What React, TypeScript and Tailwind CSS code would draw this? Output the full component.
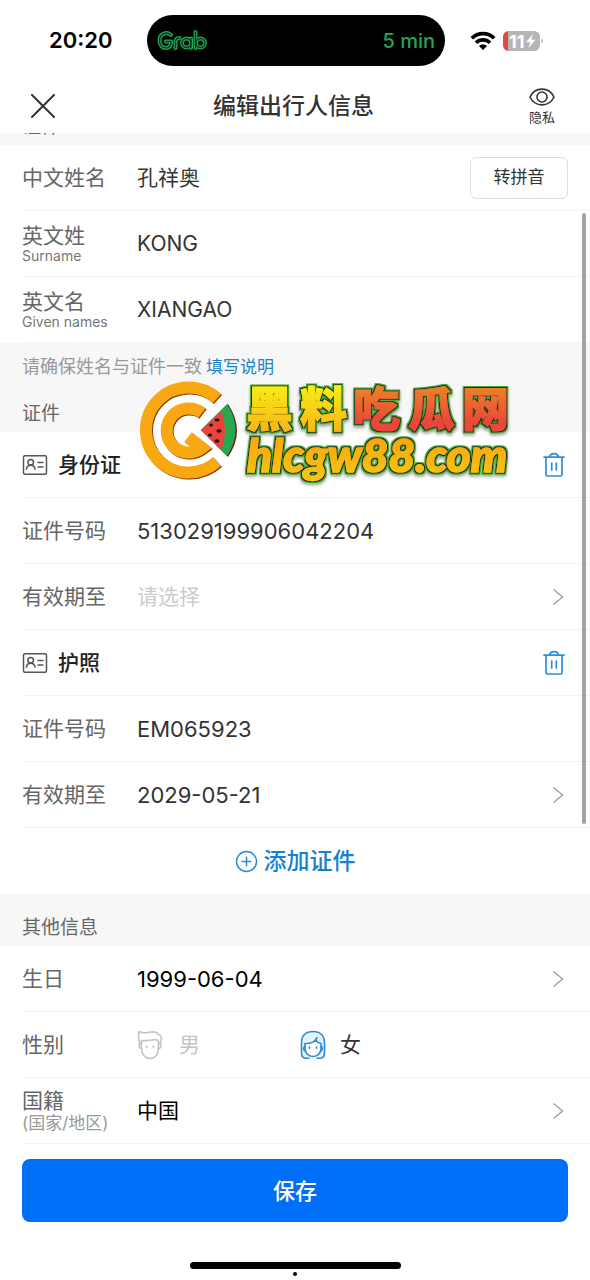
import { useState, type ReactNode } from 'react';

function Chevron() {
  return (
    <svg width="12" height="18" viewBox="0 0 12 18" fill="none" stroke="#a3a3a3" strokeWidth="1.5" aria-hidden="true">
      <path d="M1.500 1.500 10.500 9l-9 7.500" />
    </svg>
  );
}

function Trash() {
  return (
    <svg width="22" height="26" viewBox="0 0 22 26" fill="none" stroke="#2f8fd3" strokeWidth="1.7" strokeLinecap="round" strokeLinejoin="round" aria-hidden="true">
      <path d="M1 5.200h20M3 5.200v17.600q0 1.200 1.200 1.200h13.600q1.200 0 1.200-1.200V5.200M6.800 5C7 2.600 8.600 1.600 11 1.600S15 2.600 15.200 5M8.700 11v7M13.300 11v7" />
    </svg>
  );
}

function IdCard() {
  return (
    <svg width="26" height="22" viewBox="0 0 26 22" fill="none" stroke="#555" strokeWidth="1.500" aria-hidden="true">
      <rect x="1.500" y="1.800" width="23" height="18.500" rx="1.500" />
      <circle cx="8.700" cy="8.300" r="2.800" />
      <path d="M4.300 15.800c.2-3.200 1.600-4.600 4.400-4.600s4.200 1.400 4.400 4.600M15.500 8.500h6M15.500 13h6" />
    </svg>
  );
}

function MaleFace() {
  return (
    <svg width="26" height="30" viewBox="0 0 26 30" fill="none" stroke="#c4c4c4" strokeWidth="1.600" strokeLinejoin="round" strokeLinecap="round" aria-hidden="true">
      <path d="M3.200 14 1.800 9.500Q1 5 2 1.500C5 3.300 8 3 12 2.200c5-.9 8-.2 9.500 2.300 2.800.6 3.200 3.500 2.500 6.500l-1 3" />
      <path d="M4.500 10.500c5 .3 9 .2 13-1 2 0 3.500.8 4 2v7c0 6-3.700 10-8.500 10s-8.500-4-8.500-10z" />
      <path d="M4 13.500c-3 0-2.500 5 .5 5M22 13.500c3 0 2.500 5-.5 5M9.700 16v1.500M16.500 16v1.500" />
    </svg>
  );
}

function FemaleFace() {
  return (
    <svg width="26" height="30" viewBox="0 0 26 30" fill="none" stroke="#2d8bd0" strokeWidth="1.600" strokeLinejoin="round" strokeLinecap="round" aria-hidden="true">
      <path fill="#e4f4ff" d="M9 28.200H5.500C2.500 28 1.500 26 1.500 23V13C1.500 5.500 6 1.500 13 1.500S24.500 5.500 24.500 13v10c0 3-1 5-4 5.200H17" />
      <path fill="#fff" d="M5 13.500c4.500.3 8-.8 10.500-3.500 1.500 2 3 3 5.500 3.500v5c0 4.800-3.300 8-8 8s-8-3.200-8-8z" />
      <path d="M15.500 10 17 7.500M5 16.500c-2 .5-1.800 4 .5 4.500M21 16.500c2 .5 1.800 4-.5 4.500M9.500 17v1.300M16.500 17v1.300" />
    </svg>
  );
}

function Row({ children }: { children: ReactNode }) {
  return (
    <div className="ml-[22px] flex h-[66px] items-center border-b border-[#f3f3f3] pt-px pr-[22px]">{children}</div>
  );
}

function Label({ text, sub, htmlFor, cjkSub }: { text: string; sub?: string; htmlFor?: string; cjkSub?: boolean }) {
  return (
    <label htmlFor={htmlFor} className="flex w-[115px] shrink-0 flex-col text-[#666]">
      <span className="leading-6">{text}</span>
      {sub && (
        <span className={cjkSub ? 'text-[17px] leading-5 text-[#999]' : 'text-sm leading-4 text-[#777]'}>{sub}</span>
      )}
    </label>
  );
}

function Field({ id, label, sub, value, numeric, children }: { id: string; label: string; sub?: string; value: string; numeric?: boolean; children?: ReactNode }) {
  return (
    <Row>
      <Label htmlFor={id} text={label} sub={sub} />
      <input
        id={id}
        defaultValue={value}
        className={numeric ? 'min-w-0 flex-1 bg-transparent text-[22px] text-[#333] outline-none' : 'min-w-0 flex-1 bg-transparent text-[#333] outline-none'}
      />
      {children}
    </Row>
  );
}

function Picker({ id, label, sub, value, tone }: { id: string; label: string; sub?: string; value: string; tone: string }) {
  return (
    <Row>
      <Label htmlFor={id} text={label} sub={sub} cjkSub />
      <button id={id} type="button" className={`flex h-full flex-1 items-center justify-between pr-1 text-left ${tone}`}>
        <span>{value}</span>
        <Chevron />
      </button>
    </Row>
  );
}

function DocumentTitle({ name }: { name: string }) {
  return (
    <Row>
      <IdCard />
      <h3 className="ml-[10px] flex-1 font-medium text-[#222]">{name}</h3>
      <button type="button" aria-label="删除" className="pr-[3px]">
        <Trash />
      </button>
    </Row>
  );
}

function GrabStrokes() {
  return (
    <>
      <path d="M14 6Q11 3.500 8 4.200C4.500 5 2.500 8 2.500 11.500c0 5 3 7.500 6.500 7.500 3.500 0 5-2 5-6.500H9" />
      <path d="M18.500 19v-6q0-4 4-4" />
      <circle cx="29.500" cy="14" r="4.500" />
      <path d="M34 9.500V19M38.500 3v16" />
      <circle cx="43.500" cy="14" r="4.500" />
    </>
  );
}

function StatusBar() {
  return (
    <div className="flex h-20 items-center pt-px pr-[46px] pl-[49px]">
      <span className="w-[98px] text-[22px] font-semibold text-black">20:20</span>
      <div className="flex h-[51px] w-[298px] items-center justify-between rounded-full bg-black px-[10px] text-[#23a455]">
        <svg width="52" height="24" viewBox="0 0 52 24" fill="none" strokeLinecap="round" strokeLinejoin="round" role="img" aria-label="Grab">
          <g stroke="#20a858" strokeWidth="4">
            <GrabStrokes />
          </g>
          <g stroke="#063a1b" strokeWidth="1.400">
            <GrabStrokes />
          </g>
        </svg>
        <span className="text-xl font-medium">5 min</span>
      </div>
      <div className="ml-auto flex w-[74px] items-center justify-between">
        <svg width="26" height="20" viewBox="0 0 26 20" fill="none" stroke="#000" strokeWidth="3.600" aria-hidden="true">
          <path d="M1.800 7.300c6.200-6.200 16.200-6.200 22.400 0M6 11.700c3.900-3.800 10.100-3.800 14 0" />
          <path d="M13 19 9 15c2.200-2 5.800-2 8 0z" fill="#000" stroke="none" />
        </svg>
        <svg width="41" height="20" viewBox="0 0 41 20" role="img" aria-label="11">
          <defs>
            <clipPath id="cell"><rect width="37" height="20" rx="6" /></clipPath>
          </defs>
          <g clipPath="url(#cell)">
            <path d="M0 0h37v20H0z" fill="#b5b5b5" />
            <path d="M0 0h5v20H0z" fill="#e8473d" />
          </g>
          <path d="M38.500 7q3 3 0 6z" fill="#b5b5b5" />
          <text x="6" y="16.500" fontSize="18" fontWeight="700" fill="#fff" className="font-['Inter',sans-serif]">11</text>
          <path d="m30 3-7 8.200h4.300L25.500 17l7-8.200h-4.300z" fill="#fff" />
        </svg>
      </div>
    </div>
  );
}

const glyphs = [
  { ch: '黑', x: 109, fill: 'url(#gold)' },
  { ch: '料', x: 163, fill: 'url(#gold)' },
  { ch: '吃', x: 216, fill: 'url(#ember)' },
  { ch: '瓜', x: 271, fill: 'url(#ember)' },
  { ch: '网', x: 325, fill: 'url(#ember)' },
];

function Watermark() {
  return (
    <svg width="390" height="116" viewBox="0 0 390 116" role="img" aria-label="黑料吃瓜网 hlcgw88.com" className="pointer-events-none absolute top-[376px] left-[137px]">
      <defs>
        <linearGradient id="gold" x1="0" y1="0" x2="0" y2="1">
          <stop offset=".2" stopColor="#f7ef16" /><stop offset=".9" stopColor="#f9b314" />
        </linearGradient>
        <linearGradient id="amber" x1="0" y1="0" x2="0" y2="1">
          <stop offset=".2" stopColor="#fba50d" /><stop offset=".9" stopColor="#f3c515" />
        </linearGradient>
        <linearGradient id="ember" x1="0" y1="0" x2="0" y2="1">
          <stop offset=".2" stopColor="#ed8527" /><stop offset=".75" stopColor="#e9473a" />
        </linearGradient>
        <filter id="outline" x="-10%" y="-20%" width="120%" height="150%">
          <feMorphology in="SourceAlpha" operator="dilate" radius="1" result="fat0" />
          <feFlood floodColor="#153317" />
          <feComposite in2="fat0" operator="in" result="dark" />
          <feMorphology in="SourceAlpha" operator="dilate" radius="2" result="fat1" />
          <feFlood floodColor="#4aa83e" />
          <feComposite in2="fat1" operator="in" result="green" />
          <feOffset in="fat1" dy="2" />
          <feGaussianBlur stdDeviation="1.500" />
          <feComponentTransfer result="shade"><feFuncA type="linear" slope=".35" /></feComponentTransfer>
          <feMerge>
            <feMergeNode in="shade" /><feMergeNode in="green" /><feMergeNode in="dark" /><feMergeNode in="SourceGraphic" />
          </feMerge>
        </filter>
      </defs>
      <circle cx="49" cy="54" r="44" fill="#fff" />
      <g fill="none" strokeWidth="12">
        <g stroke="#8b3b12">
          <path d="M81 23.500A42.500 42.500 0 1 0 81 86.500" />
          <path d="M66 38A22 22 0 1 0 66 73L52 62" />
        </g>
        <g stroke="#f9a811">
          <path d="M80 22.500A42.500 42.500 0 1 0 80 85.500" />
          <path d="M65 37A22 22 0 1 0 65 72L51 61" />
        </g>
      </g>
      <path d="M64 54 91 28q18 27 0 53z" fill="#6d2115" />
      <path d="M64 54 90 28q17 26 0 52z" fill="#26a94d" />
      <path d="M64 54 84 35q8 19 0 39z" fill="#e9433c" />
      <g fill="#19150f">
        <ellipse cx="80" cy="44" rx="2.500" ry="1.600" /><ellipse cx="74" cy="49" rx="2" ry="1.600" />
        <ellipse cx="82" cy="55" rx="2.600" ry="1.700" /><ellipse cx="73" cy="59" rx="2.200" ry="1.500" /><ellipse cx="80" cy="65" rx="2.500" ry="1.700" />
      </g>
      <g filter="url(#outline)" className="font-['Noto_Sans_CJK_SC',sans-serif]" fontWeight="900" fontSize="47">
        {glyphs.map((g) => (
          <text key={g.ch} x={g.x} y="50" fill={g.fill} stroke={g.fill} strokeWidth="1">{g.ch}</text>
        ))}
      </g>
      <g filter="url(#outline)" className="font-['Lato',sans-serif]" fontWeight="900" fontStyle="italic" fontSize="46">
        <text x="110" y="96" fill="url(#amber)" stroke="url(#amber)" strokeWidth="1.500">hlcgw88.com</text>
      </g>
    </svg>
  );
}

export default function App() {
  const [gender, setGender] = useState('female');
  return (
    <div className="relative flex min-h-screen flex-col bg-white font-['Inter','Noto_Sans_CJK_SC',sans-serif] text-[21px] text-[#333]">
      <StatusBar />
      <header className="flex h-[53px] items-center justify-between pr-[35px] pl-[27px]">
        <button type="button" aria-label="关闭" className="flex w-[31px] justify-center">
          <svg width="26" height="26" viewBox="0 0 26 26" fill="none" stroke="#333" strokeWidth="2" strokeLinecap="round" aria-hidden="true">
            <path d="m2 1 22 22M24 1 2 23" />
          </svg>
        </button>
        <h1 className="text-[23px] font-medium text-[#333]">编辑出行人信息</h1>
        <button type="button" className="flex flex-col items-center text-[13px] leading-5 text-[#333]">
          <svg width="26" height="20" viewBox="0 0 26 20" fill="none" stroke="#333" strokeWidth="1.600" aria-hidden="true">
            <path d="M1 10C6-.5 20-.5 25 10 20 20.500 6 20.500 1 10z" />
            <circle cx="13" cy="10" r="5" />
          </svg>
          隐私
        </button>
      </header>

      <main>
        <div className="flex h-3 flex-col overflow-hidden bg-[#f7f7f7] px-[22px]">
          <h2 className="-mt-4 text-[19px] leading-5 text-[#666]">证件</h2>
        </div>
        <Field id="cn" label="中文姓名" value="孔祥奥">
          <button type="button" className="h-[42px] w-[98px] rounded-md border border-[#ddd] text-[17px] text-[#333]">转拼音</button>
        </Field>
        <Field id="surname" label="英文姓" sub="Surname" value="KONG" />
        <Field id="given" label="英文名" sub="Given names" value="XIANGAO" />

        <div className="h-[89px] bg-[#f7f7f7] px-[22px] pt-3">
          <p className="flex gap-1 text-lg leading-6 text-[#999]">
            请确保姓名与证件一致
            <a href="#help" className="text-[17px] text-[#2384cc]">填写说明</a>
          </p>
          <h2 className="mt-[23px] text-[19px] leading-6 text-[#666]">证件</h2>
        </div>

        <DocumentTitle name="身份证" />
        <Field id="idno" label="证件号码" value="513029199906042204" numeric />
        <Picker id="idexp" label="有效期至" value="请选择" tone="text-[#ccc]" />
        <DocumentTitle name="护照" />
        <Field id="passno" label="证件号码" value="EM065923" numeric />
        <Picker id="passexp" label="有效期至" value="2029-05-21" tone="text-[22px] text-[#333]" />

        <button type="button" className="flex h-[66px] w-full items-center justify-center gap-[6px] text-[23px] font-medium text-[#1681d2]">
          <svg width="23" height="23" viewBox="0 0 23 23" fill="none" stroke="#2d8bd0" strokeWidth="1.500" aria-hidden="true">
            <circle cx="11.500" cy="11.500" r="10" /><path d="M11.500 6.500v10M6.500 11.500h10" />
          </svg>
          添加证件
        </button>

        <h2 className="flex h-[52px] items-center bg-[#f7f7f7] px-[22px] pt-4 text-[19px] text-[#666]">其他信息</h2>

        <Picker id="birth" label="生日" value="1999-06-04" tone="text-[22px] text-black" />
        <Row>
          <span className="w-[115px] shrink-0 text-[#666]">性别</span>
          <label className={gender === 'male' ? 'flex w-[163px] items-center gap-4 text-[#333]' : 'flex w-[163px] items-center gap-4 text-[#c4c4c4]'}>
            <input type="radio" name="gender" className="sr-only" checked={gender === 'male'} onChange={() => setGender('male')} />
            <MaleFace />男
          </label>
          <label className={gender === 'female' ? 'flex items-center gap-[14px] text-[#333]' : 'flex items-center gap-[14px] text-[#c4c4c4]'}>
            <input type="radio" name="gender" className="sr-only" checked={gender === 'female'} onChange={() => setGender('female')} />
            <FemaleFace />女
          </label>
        </Row>
        <Picker id="nation" label="国籍" sub="(国家/地区)" value="中国" tone="text-black" />
      </main>

      <footer className="flex flex-col items-center px-[22px] pt-[15px]">
        <button type="button" className="h-[63px] w-full rounded-lg bg-[#006ff8] pt-px text-[22px] font-medium text-white">保存</button>
        <div className="mt-10 h-[7px] w-[211px] rounded-full bg-black" />
        <div className="mt-[3px] h-1 w-1 rounded-full bg-black" />
      </footer>

      <div className="absolute top-[213px] right-1 h-[611px] w-1 rounded-full bg-[#a3a3a3]" />
      <Watermark />
    </div>
  );
}
